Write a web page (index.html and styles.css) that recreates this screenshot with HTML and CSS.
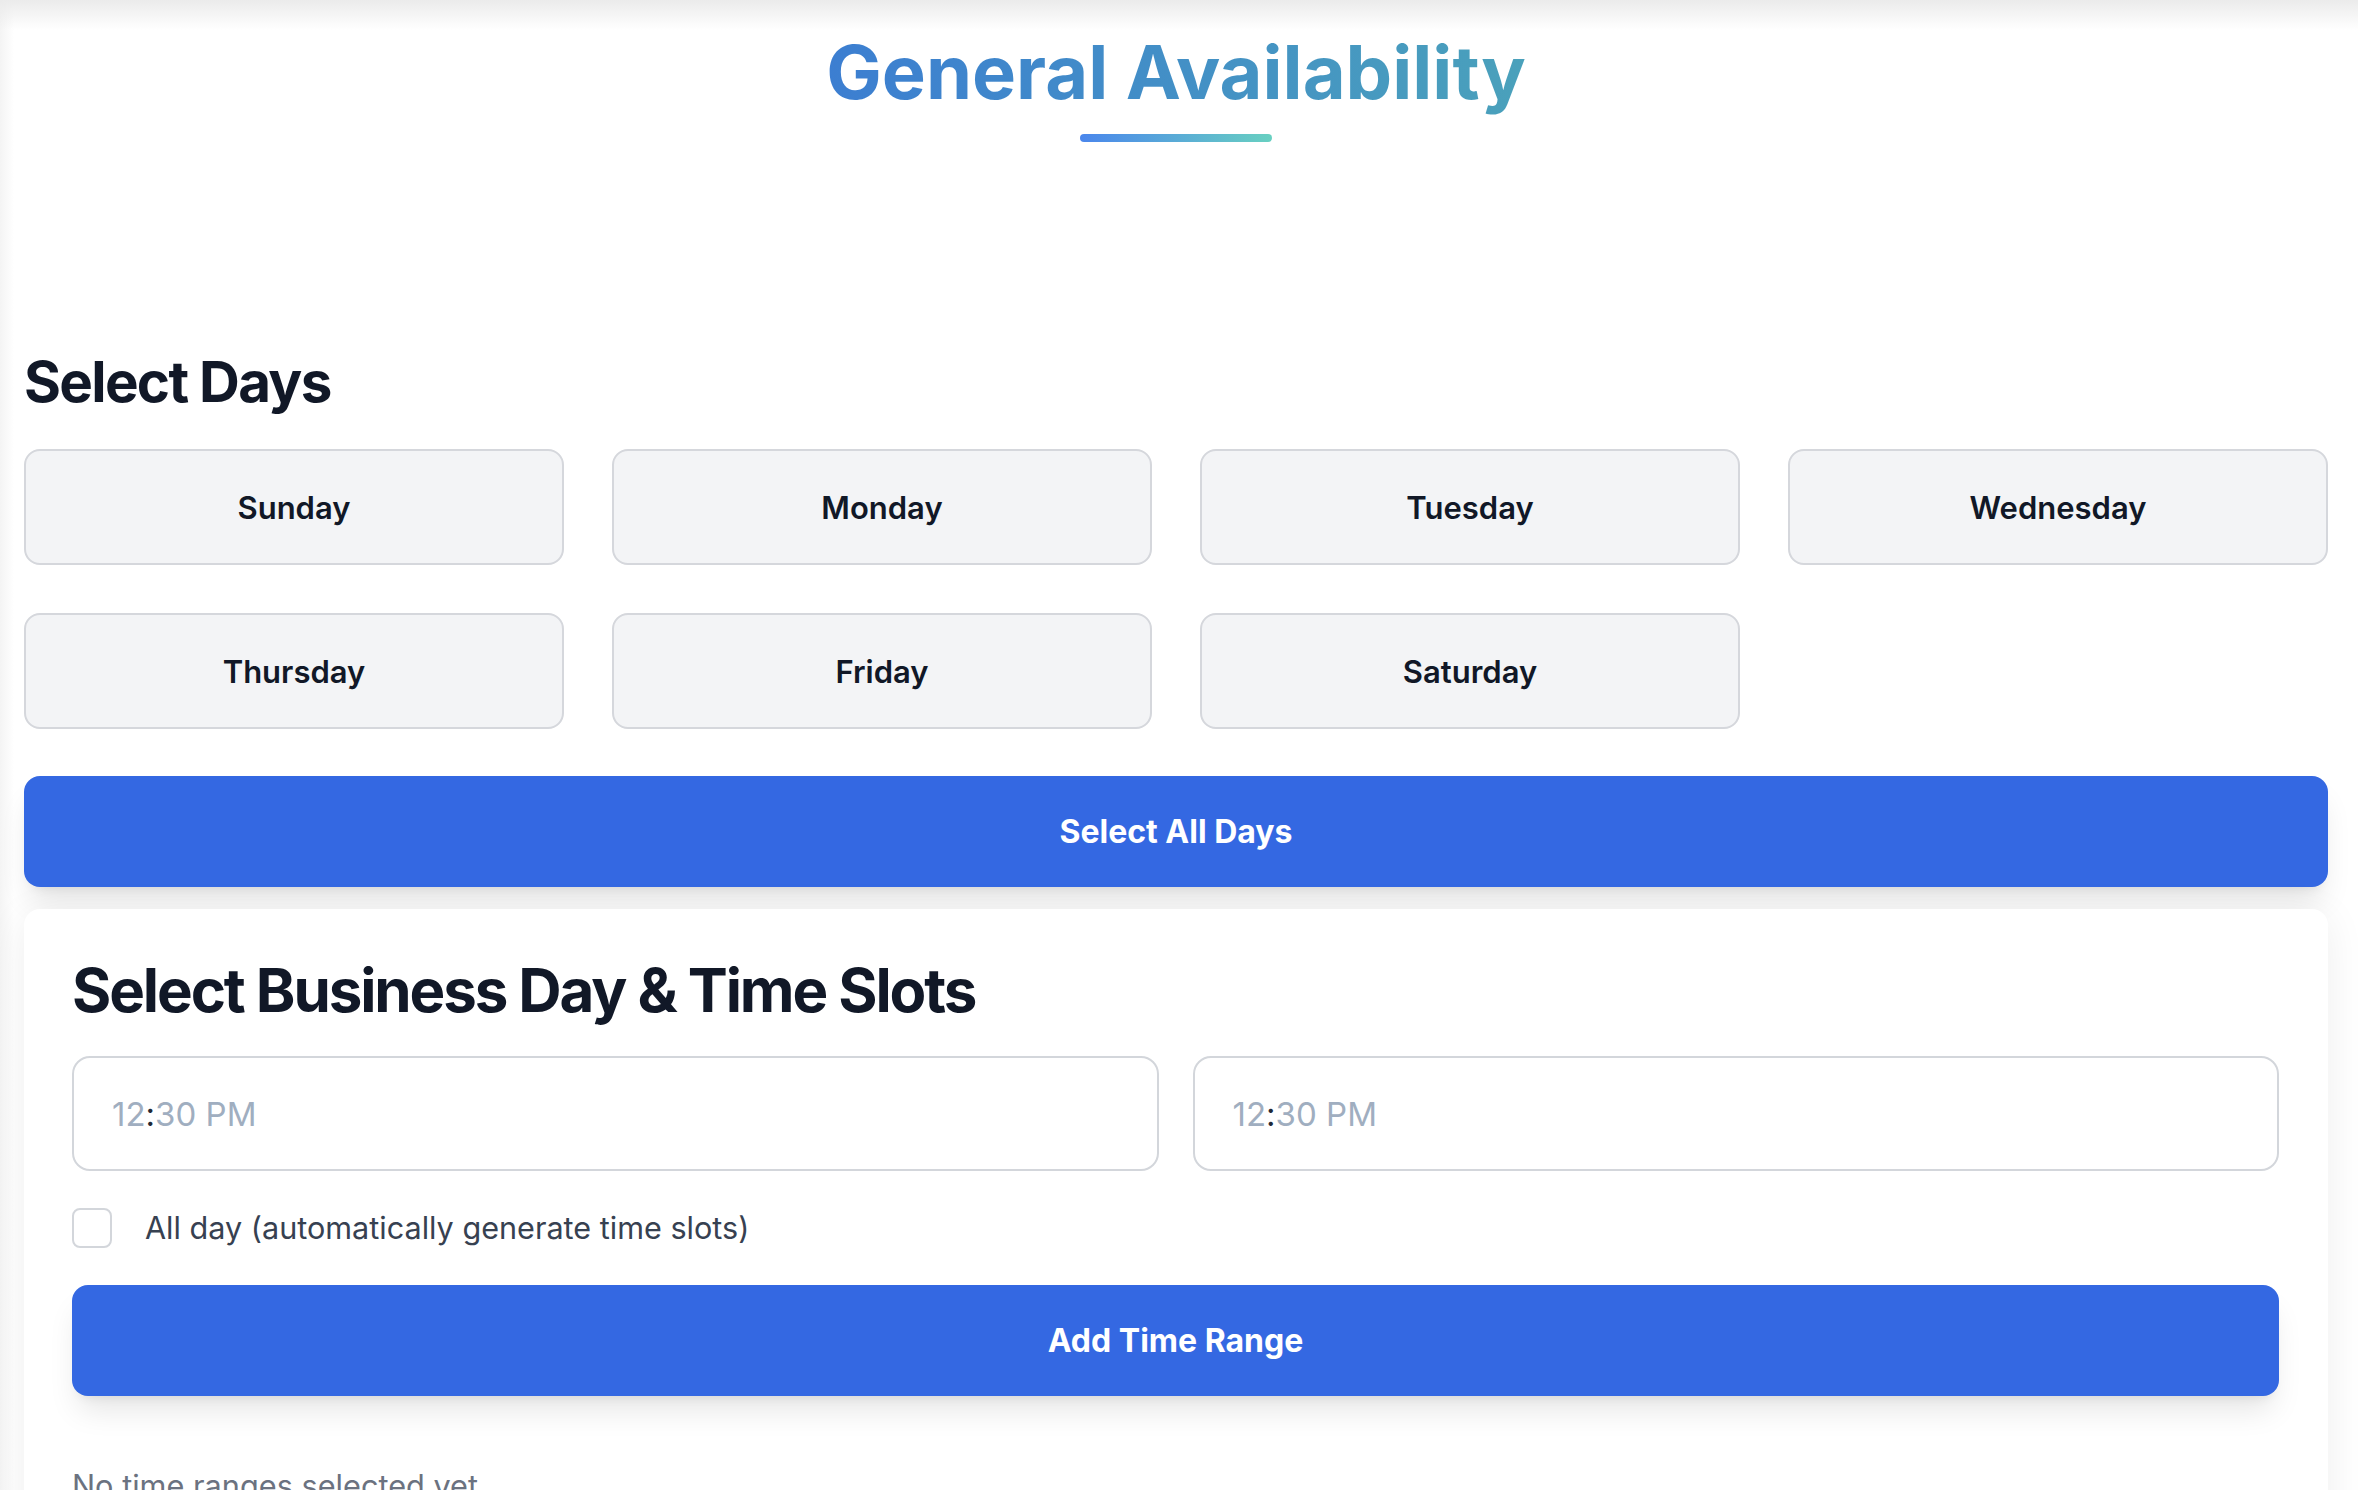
FILE: index.html
```html
<!DOCTYPE html>
<html lang="en">
<head>
<meta charset="utf-8">
<title>General Availability</title>
<link rel="stylesheet" href="styles.css">
</head>
<body>
<div class="page">
  <header class="page-header">
    <h1 class="page-title"><span class="gradient-text">General Availability</span></h1>
    <div class="title-bar"></div>
  </header>

  <section class="days-section">
    <h2 class="section-title">Select Days</h2>
    <div class="day-grid">
      <button class="day-btn">Sunday</button>
      <button class="day-btn">Monday</button>
      <button class="day-btn">Tuesday</button>
      <button class="day-btn">Wednesday</button>
      <button class="day-btn">Thursday</button>
      <button class="day-btn">Friday</button>
      <button class="day-btn">Saturday</button>
    </div>
    <button class="primary-btn select-all">Select All Days</button>
  </section>

  <section class="card">
    <h2 class="card-title">Select Business Day &amp; Time Slots</h2>
    <div class="time-row">
      <div class="time-input"><span class="ph">12</span><span class="colon">:</span><span class="ph">30 PM</span></div>
      <div class="time-input"><span class="ph">12</span><span class="colon">:</span><span class="ph">30 PM</span></div>
    </div>
    <label class="check-row">
      <input type="checkbox" class="check-box">
      <span class="check-label">All day (automatically generate time slots)</span>
    </label>
    <button class="primary-btn add-range">Add Time Range</button>
    <p class="empty-note">No time ranges selected yet</p>
  </section>
</div>
</body>
</html>
```

FILE: styles.css
```css
* { box-sizing: border-box; }

html, body {
  margin: 0;
  padding: 0;
  background: #ffffff;
  font-family: Inter, "Noto Sans", "Liberation Sans", sans-serif;
  color: #111827;
}

.page {
  min-height: 1490px;
  padding: 0 30px 0 24px;
  background:
    linear-gradient(to bottom, #ebebeb 0px, rgba(255,255,255,0) 30px),
    linear-gradient(to right, #f4f4f4 0px, rgba(255,255,255,0) 14px),
    #ffffff;
  background-repeat: no-repeat;
  overflow: hidden;
}

.page-header {
  display: flex;
  flex-direction: column;
  align-items: center;
  padding-top: 32px;
}

.page-title {
  margin: 0;
  font-size: 74px;
  line-height: 80px;
  font-weight: 700;
  letter-spacing: 0;
}

.gradient-text {
  background: linear-gradient(to right, #3c7ed1, #4aa1bb);
  -webkit-background-clip: text;
  background-clip: text;
  color: transparent;
}

.title-bar {
  width: 192px;
  height: 8px;
  margin-top: 22px;
  border-radius: 4px;
  background: linear-gradient(to right, #4a86ec, #68d0c1);
}

.days-section {
  margin-top: 206px;
}

.section-title {
  margin: 0;
  font-size: 56.5px;
  line-height: 67px;
  font-weight: 700;
  letter-spacing: -0.03em;
  color: #111827;
}

.day-grid {
  margin-top: 34px;
  display: grid;
  grid-template-columns: repeat(4, 1fr);
  gap: 48px;
}

.day-btn {
  height: 116px;
  background: #f3f4f6;
  border: 2px solid #d5d7dc;
  border-radius: 16px;
  font-family: inherit;
  font-size: 31px;
  font-weight: 600;
  color: #111827;
  padding: 0;
}

.primary-btn {
  display: block;
  width: 100%;
  border: none;
  border-radius: 16px;
  background: #3468e2;
  color: #ffffff;
  font-family: inherit;
  font-size: 32px;
  font-weight: 700;
  padding: 0;
  box-shadow: 0 20px 30px -6px rgba(0,0,0,0.10), 0 8px 12px -8px rgba(0,0,0,0.10);
}

.select-all {
  margin-top: 47px;
  height: 111px;
}

.card {
  margin-top: 22px;
  background: #ffffff;
  border-radius: 16px;
  padding: 45px 49px 48px 48px;
  box-shadow: 0 6px 40px rgba(0,0,0,0.07);
}

.card-title {
  margin: 0;
  font-size: 60px;
  line-height: 72px;
  font-weight: 700;
  letter-spacing: -0.035em;
  color: #111827;
}

.time-row {
  margin-top: 30px;
  display: grid;
  grid-template-columns: 1fr 1fr;
  gap: 34px;
}

.time-input {
  height: 115px;
  border: 2px solid #d3d6db;
  border-radius: 18px;
  padding: 0 38px;
  display: flex;
  align-items: center;
  font-size: 33px;
  color: #a0aec0;
}

.time-input .colon {
  color: #1f2937;
}

.check-row {
  margin-top: 33px;
  display: flex;
  align-items: center;
  height: 48px;
  gap: 33px;
}

.check-box {
  -webkit-appearance: none;
  appearance: none;
  margin: 0;
  width: 40px;
  height: 40px;
  border: 2px solid #d3d6db;
  border-radius: 8px;
  background: #ffffff;
  flex: none;
}

.check-label {
  font-size: 30.6px;
  line-height: 48px;
  color: #374151;
}

.add-range {
  margin-top: 33px;
  height: 111px;
}

.empty-note {
  margin: 66px 0 0;
  font-size: 30.7px;
  line-height: 48px;
  color: #6b7280;
}
```
